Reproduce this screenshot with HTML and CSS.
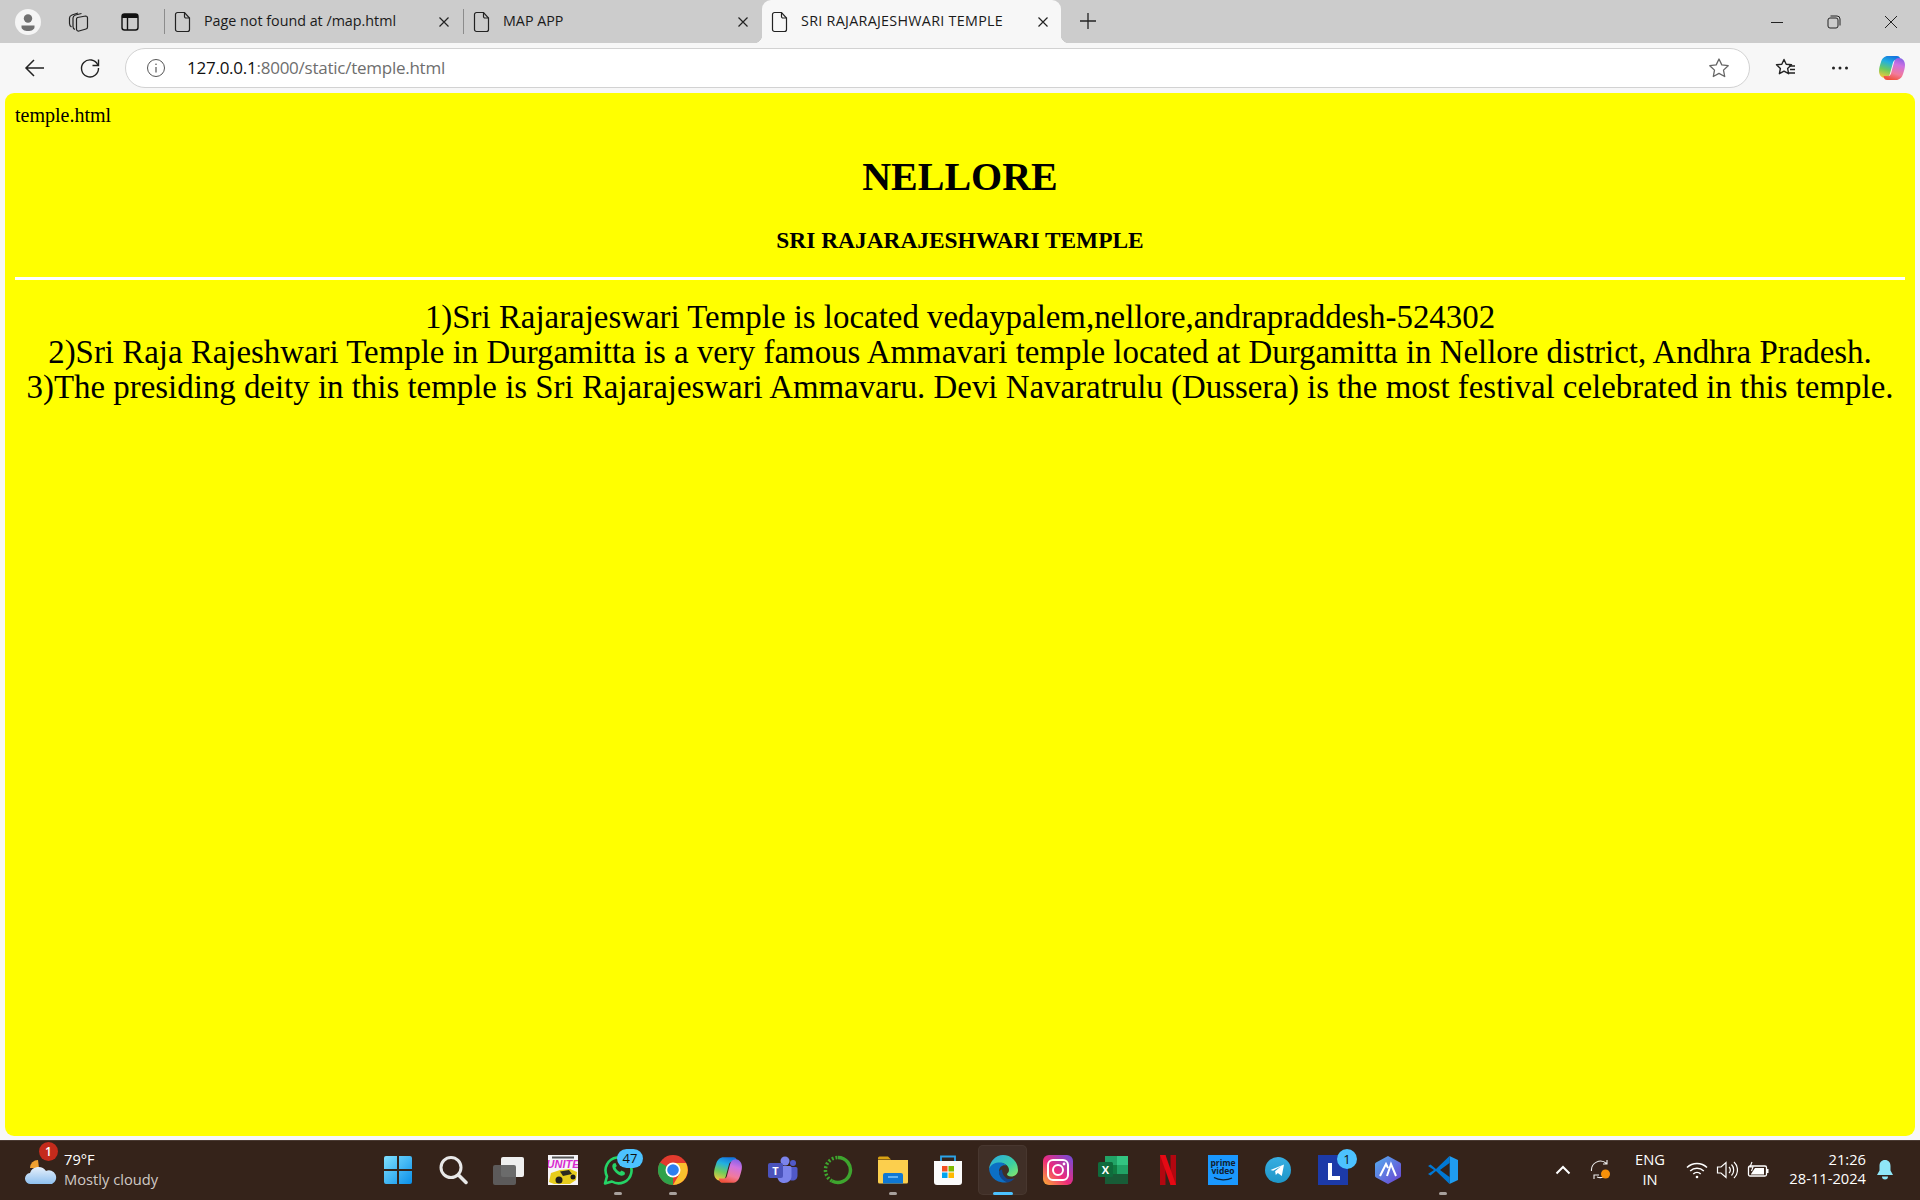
FILE: index.html
```html
<!DOCTYPE html>
<html lang="en">
<head>
<meta charset="utf-8">
<title>SRI RAJARAJESHWARI TEMPLE</title>
<link rel="stylesheet" href="styles.css">
</head>
<body>
<div class="window">
  <header class="tabstrip">
    <div class="strip-tools">
      <span class="profile"><svg width="26" height="26" viewBox="0 0 26 26"><circle cx="13" cy="13" r="13" fill="#f5f5f5"/><circle cx="13" cy="9.5" r="4.2" fill="#707070"/><path d="M6.5 16.5h13v1.5c0 2.5-3 4-6.500 4s-6.500-1.500-6.500-4z" fill="#707070"/></svg></span>
      <span class="tool-icon t-coll"><svg width="22" height="22" viewBox="0 0 22 22" fill="none" stroke="#222" stroke-width="1.200"><path d="M10.500 6.500l8-1.500a2 2 0 0 1 2 2v9a2 2 0 0 1-1.500 2l-7 2a2 2 0 0 1-2.500-2V8.500a2 2 0 0 1 1-2z"/><path d="M8 18.500C6.500 18 6 17 6 15.500V7c0-1.500 1-2.500 2.500-3l6-1.500"/><path d="M4.500 16C3 15 2.500 14 2.500 12.500V7c0-1.500 1-2.500 2.500-3l6-2"/></svg></span>
      <span class="tool-icon t-tabs"><svg width="20" height="20" viewBox="0 0 20 20"><rect x="2" y="2" width="16" height="16" rx="2.500" fill="none" stroke="#111" stroke-width="1.400"/><path d="M2 4.500a2.500 2.500 0 0 1 2.500-2.500h11a2.500 2.500 0 0 1 2.500 2.500V6H2z" fill="#111"/><path d="M7.500 6v12" stroke="#111" stroke-width="1.400"/></svg></span>
    </div>
    <div class="tab">
      <svg class="doc" width="18" height="22" viewBox="0 0 18 22" fill="none" stroke="#222" stroke-width="1.200"><path d="M3.500 1.500h7l5 5.500v11.500a2 2 0 0 1-2 2h-10a2 2 0 0 1-2-2v-15a2 2 0 0 1 2-2z"/><path d="M10.500 1.500v4a1.500 1.500 0 0 0 1.500 1.500h3.500"/></svg>
      <span class="tab-title">Page not found at /map.html</span>
      <svg class="tab-close" width="12" height="12" viewBox="0 0 12 12" stroke="#222" stroke-width="1.200"><path d="M1.500 1.500l9 9M10.500 1.500l-9 9"/></svg>
    </div>
    <div class="tab">
      <svg class="doc" width="18" height="22" viewBox="0 0 18 22" fill="none" stroke="#222" stroke-width="1.200"><path d="M3.500 1.500h7l5 5.500v11.500a2 2 0 0 1-2 2h-10a2 2 0 0 1-2-2v-15a2 2 0 0 1 2-2z"/><path d="M10.500 1.500v4a1.500 1.500 0 0 0 1.500 1.500h3.500"/></svg>
      <span class="tab-title">MAP APP</span>
      <svg class="tab-close" width="12" height="12" viewBox="0 0 12 12" stroke="#222" stroke-width="1.200"><path d="M1.500 1.500l9 9M10.500 1.500l-9 9"/></svg>
    </div>
    <div class="tab tab-active">
      <svg class="doc" width="18" height="22" viewBox="0 0 18 22" fill="none" stroke="#222" stroke-width="1.200"><path d="M3.500 1.500h7l5 5.500v11.500a2 2 0 0 1-2 2h-10a2 2 0 0 1-2-2v-15a2 2 0 0 1 2-2z"/><path d="M10.500 1.500v4a1.500 1.500 0 0 0 1.500 1.500h3.500"/></svg>
      <span class="tab-title">SRI RAJARAJESHWARI TEMPLE</span>
      <svg class="tab-close" width="12" height="12" viewBox="0 0 12 12" stroke="#222" stroke-width="1.200"><path d="M1.500 1.500l9 9M10.500 1.500l-9 9"/></svg>
    </div>
    <svg class="newtab" width="18" height="18" viewBox="0 0 18 18" stroke="#222" stroke-width="1.300"><path d="M9 1v16M1 9h16"/></svg>
    <div class="win-controls">
      <svg width="14" height="14" viewBox="0 0 14 14" stroke="#222" stroke-width="1"><path d="M1 7.500h12"/></svg>
      <svg width="14" height="14" viewBox="0 0 14 14" fill="none" stroke="#222" stroke-width="1"><rect x="1" y="3" width="10" height="10" rx="2"/><path d="M3.500 1h6.500a3 3 0 0 1 3 3v6.500"/></svg>
      <svg width="14" height="14" viewBox="0 0 14 14" stroke="#222" stroke-width="1"><path d="M1 1l12 12M13 1L1 13"/></svg>
    </div>
  </header>

  <nav class="toolbar">
    <svg class="nav-back" width="22" height="22" viewBox="0 0 22 22" fill="none" stroke="#222" stroke-width="1.500"><path d="M20 11H2M10 3l-8 8 8 8"/></svg>
    <svg class="nav-reload" width="22" height="22" viewBox="0 0 22 22" fill="none" stroke="#222" stroke-width="1.400"><path d="M18.800 8A8.500 8.500 0 1 0 19.500 11"/><path d="M19.500 2.500V8.500H13.500"/></svg>
    <div class="address">
      <svg class="info" width="20" height="20" viewBox="0 0 20 20" fill="none" stroke="#555" stroke-width="1"><circle cx="10" cy="10" r="8.500"/><path d="M10 9v5.500" stroke-width="1.200"/><circle cx="10" cy="6.300" r=".8" fill="#555" stroke="none"/></svg>
      <span class="url"><span class="url-host">127.0.0.1</span>:8000/static/temple.html</span>
      <svg class="star" width="22" height="22" viewBox="0 0 22 22" fill="none" stroke="#666" stroke-width="1.300" stroke-linejoin="round"><path d="M11 2l2.800 5.900 6.400.8-4.700 4.400 1.200 6.400-5.700-3.100-5.700 3.100 1.200-6.400L1.800 8.700l6.400-.8z"/></svg>
    </div>
    <svg class="fav" width="22" height="22" viewBox="0 0 22 22" fill="none" stroke="#222" stroke-width="1.400" stroke-linejoin="round"><path d="M9 2.500l2.200 4.700 5.300.6-3.900 3.600 1 5.300L9 14.200l-4.600 2.500 1-5.300L1.500 7.800l5.300-.6z"/><path d="M14 9h6M15 12.500h5M14 16h6"/></svg>
    <svg class="dots" width="18" height="6" viewBox="0 0 18 6" fill="#222"><circle cx="2.500" cy="3" r="1.500"/><circle cx="9" cy="3" r="1.500"/><circle cx="15.500" cy="3" r="1.500"/></svg>
    <svg class="copilot" width="28" height="28" viewBox="0 0 28 28"><defs><linearGradient id="cpa" x1=".6" y1="0" x2=".3" y2="1"><stop offset="0" stop-color="#1476e0"/><stop offset=".3" stop-color="#22b0e0"/><stop offset=".65" stop-color="#6fcb5c"/><stop offset="1" stop-color="#f2c83c"/></linearGradient><linearGradient id="cpb" x1=".6" y1="0" x2=".3" y2="1"><stop offset="0" stop-color="#f0523c"/><stop offset=".3" stop-color="#f27a9a"/><stop offset=".7" stop-color="#cf72e0"/><stop offset="1" stop-color="#8a63e8"/></linearGradient></defs><path id="cpl" d="M10 2h9c1.500 0 2.500.8 3 2l.5 2H18c-1.500 0-2.500.8-3 2.500l-3 11c-.6 2.500-2 4.500-5 4.500-3.500 0-6-3-6-7 0-3 1-6 2-9C4 4.500 6.500 2 10 2z" fill="url(#cpa)"/><path d="M10 2h9c1.500 0 2.500.8 3 2l.5 2H18c-1.500 0-2.500.8-3 2.500l-3 11c-.6 2.500-2 4.500-5 4.500-3.500 0-6-3-6-7 0-3 1-6 2-9C4 4.500 6.500 2 10 2z" fill="url(#cpb)" transform="rotate(180 14 14)"/></svg>
  </nav>

  <main class="page">
    <div class="filename">temple.html</div>
    <h1 class="city">NELLORE</h1>
    <h3 class="temple">SRI RAJARAJESHWARI TEMPLE</h3>
    <hr class="rule">
    <div class="facts">
      1)Sri Rajarajeswari Temple is located vedaypalem,nellore,andrapraddesh-524302<br>
      2)Sri Raja Rajeshwari Temple in Durgamitta is a very famous Ammavari temple located at Durgamitta in Nellore district, Andhra Pradesh.<br>
      3)The presiding deity in this temple is Sri Rajarajeswari Ammavaru. Devi Navaratrulu (Dussera) is the most festival celebrated in this temple.
    </div>
  </main>

  <footer class="taskbar">
    <div class="weather">
      <span class="weather-icon">
        <svg width="34" height="34" viewBox="0 0 34 34"><path d="M6 15a8 8 0 0 1 8-8l1 8z" fill="#f0a030"/><defs><linearGradient id="cld" x1="0" y1="0" x2="0" y2="1"><stop offset="0" stop-color="#e6f0fb"/><stop offset="1" stop-color="#8fc0ef"/></linearGradient></defs><path d="M7 31a5.500 5.500 0 0 1-1-11 9 9 0 0 1 16-2 6.500 6.500 0 0 1 6 13z" fill="url(#cld)"/></svg>
        <span class="weather-badge">1</span>
      </span>
      <span class="weather-text"><span class="temp">79°F</span><span class="sky">Mostly cloudy</span></span>
    </div>
    <div class="apps">
      <span class="app"><svg width="30" height="30" viewBox="0 0 30 30"><defs><linearGradient id="win" x1="0" y1="0" x2="1" y2="1"><stop offset="0" stop-color="#7fe0ff"/><stop offset="1" stop-color="#0a8fe8"/></linearGradient></defs><path d="M1 3a2 2 0 0 1 2-2h11v13H1zM16 1h11a2 2 0 0 1 2 2v11H16zM1 16h13v13H3a2 2 0 0 1-2-2zM16 16h13v11a2 2 0 0 1-2 2H16z" fill="url(#win)"/></svg></span>
      <span class="app"><svg width="30" height="30" viewBox="0 0 30 30" fill="none" stroke="#e8e8e8"><circle cx="13" cy="12.500" r="10" stroke-width="3"/><path d="M20.500 20l7.500 7.500" stroke-width="3.500" stroke-linecap="round"/></svg></span>
      <span class="app"><svg width="32" height="30" viewBox="0 0 32 30"><rect x="9" y="2" width="23" height="20" rx="2" fill="#efefef"/><rect x="1" y="10" width="23" height="20" rx="2" fill="#5f5f5f" fill-opacity=".92"/></svg></span>
      <span class="app"><svg width="30" height="30" viewBox="0 0 30 30"><rect width="30" height="30" fill="#f6f4f8"/><rect x="4" y="1.500" width="22" height="2" fill="#555"/><text class="unite" x="15" y="13" text-anchor="middle">UNITE</text><path d="M1 27l2-9 9-3 10-1 7 3-1 8-6 4H6z" fill="#e6cc1c"/><path d="M12 16.500l9-1.500 3 4-9 2z" fill="#2b2b20"/><circle cx="11" cy="25" r="3.500" fill="#1c1c1c"/><circle cx="25" cy="22" r="2.500" fill="#1c1c1c"/></svg></span>
      <span class="app"><svg width="30" height="30" viewBox="0 0 30 30" fill="none"><path d="M2 28.500l2-7.200A13 13 0 1 1 8.900 26.500z" stroke="#25d366" stroke-width="2.600" stroke-linejoin="round"/><path d="M10.500 8.500c-1 1-1.500 2-1 4 .8 3 4.500 7 8 8 2 .5 3.500 0 4.500-1.500l-.5-2-3-1.500-1.500 1.500c-2-.8-3.700-2.600-4.500-4.500l1.300-1.500-1.300-3z" fill="#25d366"/></svg><span class="count count-wide">47</span><span class="pip"></span></span>
      <span class="app"><svg width="30" height="30" viewBox="0 0 30 30"><circle cx="15" cy="15" r="15" fill="#e33b2e"/><path d="M15 15L2 7.500A15 15 0 0 0 15 30z" fill="#2fa24a"/><path d="M15 8h13a15 15 0 0 1-13 22L21.500 19z" fill="#fbc02d"/><circle cx="15" cy="15" r="7.500" fill="#fff"/><circle cx="15" cy="15" r="5.800" fill="#2d7ff0"/></svg><span class="pip"></span></span>
      <span class="app"><svg width="30" height="30" viewBox="0 0 28 28"><path d="M10 2h9c1.500 0 2.500.8 3 2l.5 2H18c-1.500 0-2.500.8-3 2.500l-3 11c-.6 2.500-2 4.500-5 4.500-3.500 0-6-3-6-7 0-3 1-6 2-9C4 4.500 6.500 2 10 2z" fill="url(#cpa)"/><path d="M10 2h9c1.500 0 2.500.8 3 2l.5 2H18c-1.500 0-2.500.8-3 2.500l-3 11c-.6 2.500-2 4.500-5 4.500-3.500 0-6-3-6-7 0-3 1-6 2-9C4 4.500 6.500 2 10 2z" fill="url(#cpb)" transform="rotate(180 14 14)"/></svg></span>
      <span class="app"><svg width="30" height="30" viewBox="0 0 30 30"><circle cx="17" cy="6" r="4.500" fill="#7b83eb"/><circle cx="25" cy="8" r="3" fill="#5059c9"/><path d="M21 12h7a1.500 1.500 0 0 1 1.500 1.500v7c0 3-2 5-5 5-1.500 0-3-.5-3.500-1.500z" fill="#5059c9"/><path d="M10 11h12a1.500 1.500 0 0 1 1.500 1.500V21c0 4-3 7-7 7s-6-2-7-5z" fill="#7b83eb"/><rect x="0" y="8" width="15" height="15" rx="2" fill="#4b53bc"/><text class="teams" x="7.500" y="20" text-anchor="middle">T</text></svg></span>
      <span class="app"><svg width="30" height="30" viewBox="0 0 30 30" fill="none"><path d="M15 2.500a12.500 12.500 0 1 1-6 23.500" stroke="#3ea52e" stroke-width="3.500"/><path d="M9 26A12.500 12.500 0 0 1 15 2.500" stroke="#3ea52e" stroke-width="3.500" stroke-dasharray="2 1.800"/></svg></span>
      <span class="app"><svg width="30" height="30" viewBox="0 0 30 30"><path d="M0 3a1.500 1.500 0 0 1 1.500-1.500H10l3 3h-13z" fill="#d9a213"/><path d="M0 5h30v22a1.500 1.500 0 0 1-1.500 1.500h-27A1.500 1.500 0 0 1 0 27z" fill="#fccf4d"/><path d="M5 20a2 2 0 0 1 2-2h16a2 2 0 0 1 2 2v8.500H5z" fill="#0f78d4"/><path d="M10 22h10" stroke="#7cc6ff" stroke-width="1.500"/></svg><span class="pip"></span></span>
      <span class="app"><svg width="30" height="32" viewBox="0 0 30 32"><path d="M8 7V2.500h14V7" fill="none" stroke="#2ba3e8" stroke-width="1.800"/><path d="M1 7h28v21a3 3 0 0 1-3 3H4a3 3 0 0 1-3-3z" fill="#fbfbfb"/><rect x="9" y="12" width="5.500" height="5.500" fill="#f25022"/><rect x="15.500" y="12" width="5.500" height="5.500" fill="#7fba00"/><rect x="9" y="18.500" width="5.500" height="5.500" fill="#00a4ef"/><rect x="15.500" y="18.500" width="5.500" height="5.500" fill="#ffb900"/></svg></span>
      <span class="app app-active"><svg width="30" height="30" viewBox="0 0 30 30"><defs><linearGradient id="edg" x1="0" y1="0" x2="1" y2="1"><stop offset="0" stop-color="#2aa8e8"/><stop offset=".6" stop-color="#3cd0a0"/><stop offset="1" stop-color="#8ae86a"/></linearGradient></defs><path d="M15 0a15 15 0 0 1 15 15c0 4-3 6.500-7 6.500-2.500 0-4-1-4-2.200 0-1 2-1.500 2-4.300 0-4-4-7-8-7-5 0-10 3-12 6C2 6 8 0 15 0z" fill="url(#edg)"/><path d="M1 14c2-5 6-6.500 11-6.500 3.500 0 6 2 6 3-3-1-7 1-7 6 0 4 3 9 9 10.500A15 15 0 0 1 1 14z" fill="#0c6fc4"/><path d="M11 17c0 4 3 9 9 10.500a15 15 0 0 0 7-4.500c-5 2-8 1-9.500-.5-2.500-2.500-3-4-3.500-8-2 .5-3 1-3 2.500z" fill="#11468e"/></svg><span class="pip pip-active"></span></span>
      <span class="app"><svg width="30" height="30" viewBox="0 0 30 30" fill="none"><defs><linearGradient id="ig" x1="0" y1="1" x2="1" y2="0"><stop offset="0" stop-color="#fdb130"/><stop offset=".45" stop-color="#ee2a7b"/><stop offset="1" stop-color="#6b4de0"/></linearGradient></defs><rect width="30" height="30" rx="6" fill="url(#ig)"/><rect x="5" y="5" width="20" height="20" rx="5" stroke="#fff" stroke-width="2"/><circle cx="15" cy="15" r="5" stroke="#fff" stroke-width="2"/><circle cx="21" cy="9" r="1.400" fill="#fff"/></svg></span>
      <span class="app"><svg width="30" height="30" viewBox="0 0 30 30"><rect x="7" y="1" width="23" height="9" fill="#21a366"/><rect x="7" y="10" width="12" height="9" fill="#107c41"/><rect x="19" y="1" width="11" height="9" fill="#33c481"/><rect x="19" y="10" width="11" height="9" fill="#21a366"/><rect x="7" y="19" width="23" height="10" fill="#185c37"/><rect x="0" y="7" width="15" height="15" rx="1.500" fill="#0f6b3c"/><text class="xl" x="7.500" y="19" text-anchor="middle">X</text></svg></span>
      <span class="app"><svg width="18" height="30" viewBox="0 0 18 30"><path d="M1 0h5.500v30L1 30z" fill="#b20710"/><path d="M11.500 0H17v30h-5.500z" fill="#b20710"/><path d="M1 0h5.500L17 30h-5.500z" fill="#e50914"/></svg></span>
      <span class="app"><svg width="30" height="30" viewBox="0 0 30 30"><rect width="30" height="30" fill="#1a98ff"/><text class="prime" x="15" y="11" text-anchor="middle">prime</text><text class="prime" x="15" y="19" text-anchor="middle">video</text><path d="M6 22.500c5 3 13 3 18 .5" fill="none" stroke="#10202f" stroke-width="1.300"/></svg></span>
      <span class="app"><svg width="26" height="26" viewBox="0 0 26 26"><defs><linearGradient id="tg" x1="0" y1="0" x2="0" y2="1"><stop offset="0" stop-color="#37aee2"/><stop offset="1" stop-color="#1e96c8"/></linearGradient></defs><circle cx="13" cy="13" r="13" fill="url(#tg)"/><path d="M5.500 13l13.500-5.500-2.200 11.500-4-3-2 2-.7-3.800 6-5-8 4.500z" fill="#fff"/></svg></span>
      <span class="app"><svg width="30" height="30" viewBox="0 0 30 30"><rect width="30" height="30" fill="#1c3aa8"/><path d="M10 8h4v13h8v4H10z" fill="#fff"/></svg><span class="count count-round">1</span></span>
      <span class="app"><svg width="28" height="30" viewBox="0 0 28 30" fill="none"><defs><linearGradient id="arc" x1="0" y1="0" x2="1" y2="1"><stop offset="0" stop-color="#55b0f0"/><stop offset="1" stop-color="#6a3fd0"/></linearGradient></defs><path d="M14 1l12 6.500a2 2 0 0 1 1 1.800v11.400a2 2 0 0 1-1 1.800L14 29 2 22.500a2 2 0 0 1-1-1.800V9.300a2 2 0 0 1 1-1.800z" fill="url(#arc)"/><path d="M6 21l6-12 2 4M13 21l4-12 5 12" stroke="#fff" stroke-width="2"/></svg></span>
      <span class="app"><svg width="30" height="30" viewBox="0 0 30 30"><path d="M21.500 1L30 5v20l-8.500 4z" fill="#1f9cf0"/><path d="M21.500 1L8 14 2.500 9.500 0 11l6 4-6 4 2.500 1.500L8 16l13.500 13z" fill="#0078d4"/><path d="M21.500 8v14L12 15z" fill="#35231a"/></svg><span class="pip"></span></span>
    </div>
    <div class="tray">
      <svg class="tray-chevron" width="16" height="10" viewBox="0 0 16 10" fill="none" stroke="#fff" stroke-width="2"><path d="M1.500 8.500L8 2l6.500 6.500"/></svg>
      <span class="tray-sync"><svg width="22" height="22" viewBox="0 0 22 22" fill="none" stroke="#eee" stroke-width="1.100"><path d="M1.500 12a9 9 0 0 1 15-7.500M17 1v4h-4"/><path d="M18 14a9 9 0 0 1-11 4M4 20v-4h5"/><circle cx="15.500" cy="15" r="4.500" fill="#f79009" stroke="none"/></svg></span>
      <span class="lang"><span>ENG</span><span>IN</span></span>
      <svg class="tray-wifi" width="22" height="18" viewBox="0 0 22 18" fill="none" stroke="#fff" stroke-width="1.500"><path d="M1 6.500a14.500 14.500 0 0 1 20 0M4.200 10a10 10 0 0 1 13.600 0M7.300 13a5.500 5.500 0 0 1 7.400 0"/><circle cx="11" cy="16" r="1.300" fill="#fff" stroke="none"/></svg>
      <svg class="tray-vol" width="22" height="20" viewBox="0 0 22 20" fill="none" stroke="#fff" stroke-width="1.200"><path d="M1.500 7h3.500l5-4.500v15L5 13H1.500z"/><path d="M13 7a4 4 0 0 1 0 6M15.500 4.500a8 8 0 0 1 0 11M18 2a11 11 0 0 1 0 16"/></svg>
      <svg class="tray-batt" width="22" height="18" viewBox="0 0 22 18"><path d="M3 5h15a1.500 1.500 0 0 1 1.500 1.500v7a1.500 1.500 0 0 1-1.500 1.500H3a1.500 1.500 0 0 1-1.500-1.500v-7A1.500 1.500 0 0 1 3 5z" fill="none" stroke="#fff" stroke-width="1.300"/><rect x="20" y="8" width="1.500" height="4" fill="#fff"/><path d="M4 13l4-6h9v6.500H4z" fill="#fff"/><path d="M5 1L3 6h3L4.500 10" fill="none" stroke="#fff" stroke-width="1.100"/></svg>
      <span class="clock"><span>21:26</span><span>28-11-2024</span></span>
      <svg class="tray-bell" width="18" height="20" viewBox="0 0 18 20" fill="#8fe6f7"><path d="M9 0c-3.500 0-5.500 2.500-5.500 6v4.500L1 15h16l-2.500-4.500V6C14.500 2.500 12.500 0 9 0z"/><path d="M6 16.500a3 3 0 0 0 6 0z"/></svg>
    </div>
  </footer>
</div>
</body>
</html>
```
FILE: styles.css
```css
* { box-sizing: border-box; }
html, body { margin: 0; height: 100%; }
body { background: #f7f7f7; overflow: hidden; }
svg { display: block; flex: none; }

.window { display: flex; flex-direction: column; height: 1200px; }

/* tab strip */
.tabstrip {
  display: flex; align-items: center; height: 43px; flex: none;
  background: #cccccc; font-family: "Open Sans", "Noto Sans", sans-serif; color: #1a1a1a;
}
.strip-tools { display: flex; align-items: center; width: 164px; padding-left: 15px; flex: none; }
.profile { width: 26px; }
.t-coll { margin-left: 26px; }
.t-tabs { margin-left: 31px; }
.tab {
  position: relative; display: flex; align-items: center; width: 299px; height: 43px;
  padding: 0 13px 0 10px; flex: none;
}
.tab::before {
  content: ""; position: absolute; left: 0; top: 9px; height: 25px; width: 1px; background: #8c8c8c;
}
.tab-title { margin-left: 12px; padding-bottom: 2px; font-size: 14.300px; white-space: nowrap; flex: 1; }
.tab-close { flex: none; }
.tab-active {
  background: #f7f7f7; border-radius: 9px 9px 0 0; padding-left: 9px; padding-right: 12px;
}
.tab-active .tab-title { letter-spacing: 0.3px; }
.tab-active::before { display: none; }
.tab-active::after {
  content: ""; position: absolute; left: -8px; right: -8px; bottom: 0; height: 8px; z-index: 0;
  background:
    radial-gradient(circle at 0 0, #cccccc 8px, #f7f7f7 8.500px) left bottom / 8px 8px no-repeat,
    radial-gradient(circle at 100% 0, #cccccc 8px, #f7f7f7 8.500px) right bottom / 8px 8px no-repeat;
  pointer-events: none;
}
.newtab { margin-left: 18px; margin-top: -1px; }
.win-controls { display: flex; align-items: center; gap: 43px; margin-left: auto; padding-right: 22px; }

/* toolbar */
.toolbar { display: flex; align-items: center; height: 50px; flex: none; padding-left: 24px; background: #f7f7f7; }
.nav-reload { margin-left: 33px; }
.address {
  display: flex; align-items: center; width: 1625px; height: 40px; margin-left: 24px;
  background: #fff; border: 1.500px solid #d2d2d2; border-radius: 20px; padding: 0 19px 0 20px;
  font-family: "Open Sans", "Noto Sans", sans-serif;
}
.url { margin-left: 21px; padding-bottom: 2px; font-size: 17px; letter-spacing: -0.25px; color: #6e6e6e; flex: 1; white-space: nowrap; }
.url-host { color: #101010; }
.fav { margin-left: 25px; }
.dots { margin-left: 34px; }
.copilot { margin-left: 29px; }

/* page */
.page {
  flex: 1; margin: 0 5px 4px 5px; padding: 10.500px 10px 0; background: #ffff00; border-radius: 9px;
  font-family: "Liberation Serif", "Times New Roman", serif; font-size: 20px; color: #000; overflow: hidden;
}
.filename { line-height: 23px; }
.city { margin: 27.500px 0 27px; font-size: 40px; line-height: 46px; text-align: center; }
.temple { margin: 23px 0; font-size: 23.400px; line-height: 27px; text-align: center; }
.rule { height: 3px; margin: 23px 0 20px; border: 0; background: #fff; }
.facts { font-size: 32.900px; line-height: 35px; text-align: center; white-space: nowrap; }

/* taskbar */
.taskbar {
  display: flex; align-items: center; height: 60px; flex: none; background: #35231a;
  box-shadow: inset 0 1px 0 #4a3a33; font-family: "Open Sans", "Noto Sans", sans-serif; color: #fff;
}
.weather { display: flex; align-items: center; width: 370px; padding-left: 24px; flex: none; }
.weather-icon { position: relative; width: 34px; height: 34px; }
.weather-badge {
  position: absolute; left: 15px; top: -11px; width: 19px; height: 19px; border-radius: 50%;
  background: #c42b1c; font-size: 12px; font-weight: 600; line-height: 19px; text-align: center;
}
.weather-text { display: flex; flex-direction: column; margin-left: 6px; padding-bottom: 2px; font-size: 14.700px; line-height: 20px; }
.sky { color: #cfc9c5; }
.apps { display: grid; grid-template-columns: repeat(20, 55px); height: 60px; flex: none; }
.app { position: relative; display: flex; align-items: center; justify-content: center; }
.app-active::before {
  content: ""; position: absolute; left: 3px; right: 3px; top: 5px; bottom: 5px;
  border-radius: 5px; background: rgba(255, 255, 255, 0.06); border: 1px solid rgba(255,255,255,0.04);
}
.app svg { position: relative; }
.pip {
  position: absolute; left: 50%; bottom: 5px; width: 8px; height: 3px; margin-left: -4px;
  border-radius: 2px; background: #a8a19d;
}
.pip-active { width: 20px; margin-left: -10px; background: #4cc2ff; }
.count {
  position: absolute; top: 9px; height: 19px; border-radius: 10px; background: #4cc2ff; color: #111;
  font-size: 13px; line-height: 19px; text-align: center;
}
.count-wide { left: 27px; width: 26px; }
.count-round { left: 32px; width: 20px; height: 20px; line-height: 20px; }
.unite { font: italic 900 11px "Liberation Sans", sans-serif; fill: #d92bd0; }
.teams { font: 700 11px "Open Sans", sans-serif; fill: #fff; }
.xl { font: 700 11px "Open Sans", sans-serif; fill: #fff; }
.prime { font: 700 8.500px "Open Sans", sans-serif; fill: #10202f; }

.tray { position: relative; display: flex; align-items: center; flex: 1; height: 60px; padding-left: 85px; font-size: 14.700px; }
.tray-sync { margin-left: 19px; }
.lang { display: flex; flex-direction: column; align-items: center; width: 36px; margin-left: 20px; padding-bottom: 2px; line-height: 20px; }
.tray-wifi { margin-left: 18px; }
.tray-vol { margin-left: 8px; }
.tray-batt { margin-left: 9px; }
.clock { display: flex; flex-direction: column; align-items: flex-end; width: 90px; margin-left: 7px; padding-bottom: 2px; line-height: 19px; }
.tray-bell { margin-left: 10px; }
```
